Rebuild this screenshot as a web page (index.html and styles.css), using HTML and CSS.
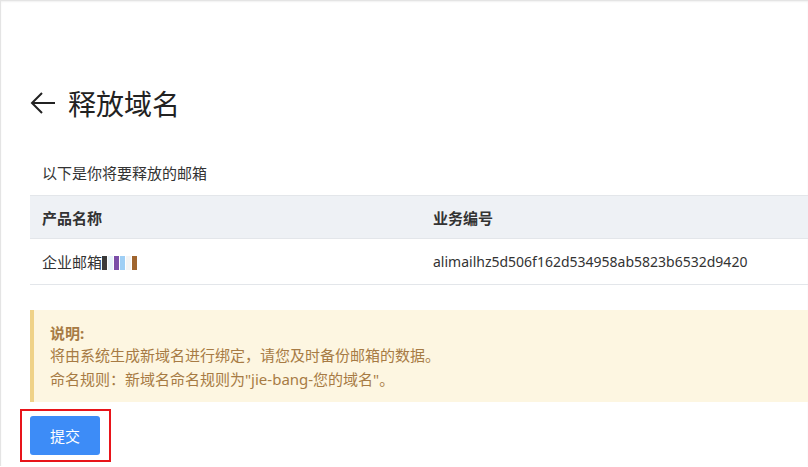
FILE: index.html
```html
<!DOCTYPE html>
<html lang="zh-CN">
<head>
    <meta charset="UTF-8">
    <meta name="viewport" content="width=device-width, initial-scale=1.0">
    <title>释放域名</title>
    <link rel="stylesheet" href="styles.css">
</head>
<body>
    <div class="page">
        <h2 class="title">
            <svg class="back" width="26" height="22" viewBox="0 0 26 22">
                <path d="M25 11H2M12 1L2 11L12 21" fill="none" stroke="#222" stroke-width="2"/>
            </svg>
            释放域名
        </h2>
        <p class="intro">以下是你将要释放的邮箱</p>
        <table>
            <colgroup>
                <col class="col-name">
                <col>
            </colgroup>
            <thead>
                <tr>
                    <th>产品名称</th>
                    <th>业务编号</th>
                </tr>
            </thead>
            <tbody>
                <tr>
                    <td>企业邮箱<span class="blur">
                        <i style="background:#3a3a3a"></i><i style="background:#e8f4fb"></i>
                        <i style="background:#7c4fa8"></i><i style="background:#9fcff5"></i>
                        <i style="background:#f4f4f4"></i><i style="background:#a0652e"></i>
                    </span></td>
                    <td class="mono">alimailhz5d506f162d534958ab5823b6532d9420</td>
                </tr>
            </tbody>
        </table>
        <div class="notice">
            <div class="notice-title">说明:</div>
            <div>将由系统生成新域名进行绑定，请您及时备份邮箱的数据。</div>
            <div>命名规则：新域名命名规则为"jie-bang-您的域名"。</div>
        </div>
        <div class="mark">
            <button>提交</button>
        </div>
    </div>
</body>
</html>
```

FILE: styles.css
```css
body {
    margin: 0;
    font-family: "Noto Sans", "Noto Sans CJK SC", sans-serif;
    color: #333;
    background: #fff;
}
.page {
    min-height: 465px;
    padding-left: 29px;
    border-top: 1px solid #e4e4e4;
    border-left: 1px solid #e4e4e4;
    box-shadow: inset 0 1px 2px rgba(0, 0, 0, 0.06);
    overflow: hidden;
}
.title {
    display: flex;
    align-items: center;
    margin: 82px 0 0;
    height: 40px;
    font-size: 28px;
    font-weight: normal;
    color: #222;
}
.back {
    margin-right: 12px;
}
.intro {
    margin: 38px 0 0 12px;
    font-size: 15px;
    line-height: 24px;
}
table {
    width: 800px;
    margin-top: 10px;
    border-collapse: collapse;
    table-layout: fixed;
    font-size: 15px;
}
.col-name {
    width: 391px;
}
th, td {
    text-align: left;
    padding: 0 12px;
    border-top: 1px solid #e3e6ea;
    border-bottom: 1px solid #e3e6ea;
    white-space: nowrap;
}
th {
    height: 42px;
    background: #eef1f5;
    font-weight: bold;
}
td {
    height: 45px;
}
.mono {
    font-size: 14px;
}
.blur {
    display: inline-flex;
    vertical-align: -2px;
}
.blur i {
    width: 5px;
    height: 14px;
    margin-right: 1px;
}
.notice {
    margin-top: 25px;
    width: 780px;
    padding: 11px 16px 11px 16px;
    border-left: 4px solid #efd288;
    background: #fdf6e1;
    color: #a77b44;
    font-size: 15px;
    line-height: 24px;
}
.notice-title {
    font-weight: bold;
    margin-bottom: -2px;
}
.mark {
    display: inline-block;
    margin: 7px 0 0 -10px;
    padding: 5px 9px 5px 8px;
    border: 2px solid #e8141a;
}
button {
    display: block;
    width: 70px;
    height: 39px;
    border: none;
    border-radius: 3px;
    background: #3d8cf7;
    color: #fff;
    font-family: "Noto Sans CJK SC", sans-serif;
    font-size: 15px;
    cursor: pointer;
}
```
